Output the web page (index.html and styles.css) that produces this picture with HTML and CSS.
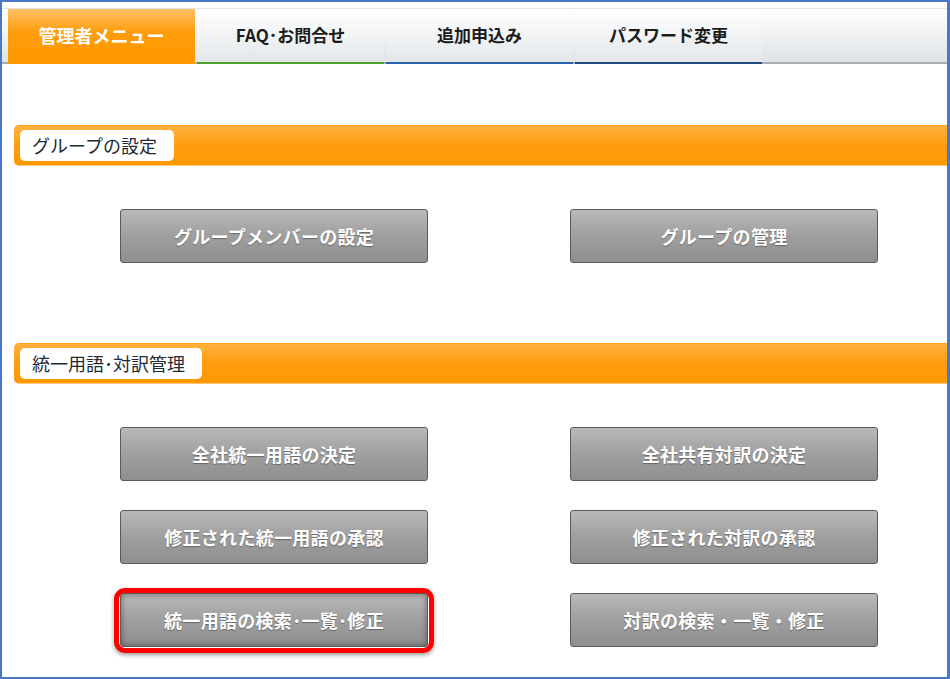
FILE: index.html
```html
<!DOCTYPE html>
<html lang="ja">
<head>
  <meta charset="UTF-8" />
  <title>管理者メニュー</title>
  <link rel="stylesheet" href="styles.css">
</head>
<body>
  <div class="frame">
    <div class="tabbar">
      <div class="tab active">管理者メニュー</div>
      <div class="tab tab-faq">FAQ･お問合せ</div>
      <div class="tab tab-add">追加申込み</div>
      <div class="tab tab-pass">パスワード変更</div>
    </div>

    <div class="section">
      <div class="section-title"><span>グループの設定</span></div>
      <div class="btn-grid">
        <button class="menu-btn">グループメンバーの設定</button>
        <button class="menu-btn">グループの管理</button>
      </div>
    </div>

    <div class="section">
      <div class="section-title"><span>統一用語･対訳管理</span></div>
      <div class="btn-grid">
        <button class="menu-btn">全社統一用語の決定</button>
        <button class="menu-btn">全社共有対訳の決定</button>
        <button class="menu-btn">修正された統一用語の承認</button>
        <button class="menu-btn">修正された対訳の承認</button>
        <button class="menu-btn highlight">統一用語の検索･一覧･修正</button>
        <button class="menu-btn">対訳の検索・一覧・修正</button>
      </div>
    </div>
  </div>
</body>
</html>
```

FILE: styles.css
```css
body {
  margin: 0;
  padding: 0;
  background: #ffffff;
  font-family: "Noto Sans CJK JP", "Noto Sans", sans-serif;
}
.frame {
  width: 950px;
  height: 679px;
  box-sizing: border-box;
  border: 2px solid #4a78c8;
  border-right-width: 3px;
  padding-top: 6px;
  overflow: hidden;
}

/* タブ */
.tabbar {
  display: flex;
  gap: 2px;
  padding-left: 6px;
  height: 56px;
  box-sizing: border-box;
  border-top: 1px solid #e2e6ea;
  border-bottom: 2px solid #a9adb1;
  background: linear-gradient(#ffffff, #dfe3e6);
}
.tab {
  width: 187px;
  display: flex;
  align-items: center;
  justify-content: center;
  font-size: 17px;
  font-weight: bold;
  color: #1c1c1c;
  background: linear-gradient(#ffffff, #e3e7ea);
  border-bottom: 2px solid transparent;
  margin-bottom: -2px;
  padding-bottom: 2px;
}
.tab.active {
  color: #ffffff;
  font-size: 18px;
  background: linear-gradient(#ffc266, #ff9c0a 45%, #ff9900);
  border-bottom-color: #ff9900;
}
.tab-faq {
  border-bottom-color: #4aa02c;
}
.tab-add {
  border-bottom-color: #2b63a8;
}
.tab-pass {
  border-bottom-color: #1f4c80;
}

/* セクション */
.section {
  padding-top: 61px;
}
.section + .section {
  padding-top: 80px;
}
.section-title {
  margin-left: 12px;
  height: 41px;
  box-sizing: border-box;
  padding: 4px 6px;
  background: linear-gradient(#ffb13e, #ff9c0f 50%, #ff9900);
  border-top: 1px solid #ffa21a;
  border-bottom: 1px solid #ffc77a;
  border-radius: 5px 0 0 5px;
}
.section-title span {
  display: inline-block;
  height: 31px;
  line-height: 31px;
  padding: 0 17px 0 12px;
  background: #ffffff;
  border-radius: 5px;
  font-size: 18px;
  color: #222a33;
}

/* ボタン */
.btn-grid {
  display: grid;
  grid-template-columns: 308px 308px;
  column-gap: 142px;
  row-gap: 29px;
  padding: 43px 0 0 118px;
}
.menu-btn {
  position: relative;
  height: 54px;
  border: 1px solid #5a5a5a;
  border-radius: 3px;
  background: linear-gradient(#b9b9b9, #9f9f9f 50%, #8f8f8f);
  color: #ffffff;
  font-family: "Noto Sans CJK JP", sans-serif;
  font-size: 18px;
  font-weight: bold;
  letter-spacing: 0.3px;
  text-shadow: 0 1px 1px rgba(0,0,0,0.35);
  cursor: pointer;
}
.menu-btn.highlight {
  box-shadow: inset 0 0 6px rgba(0,0,0,0.45);
}
.menu-btn.highlight::after {
  content: "";
  position: absolute;
  top: -6px;
  left: -7px;
  right: -7px;
  bottom: -7px;
  border: 5px solid #ff0000;
  border-radius: 11px;
  box-shadow: 0 2px 4px rgba(0,0,0,0.4);
}
```
